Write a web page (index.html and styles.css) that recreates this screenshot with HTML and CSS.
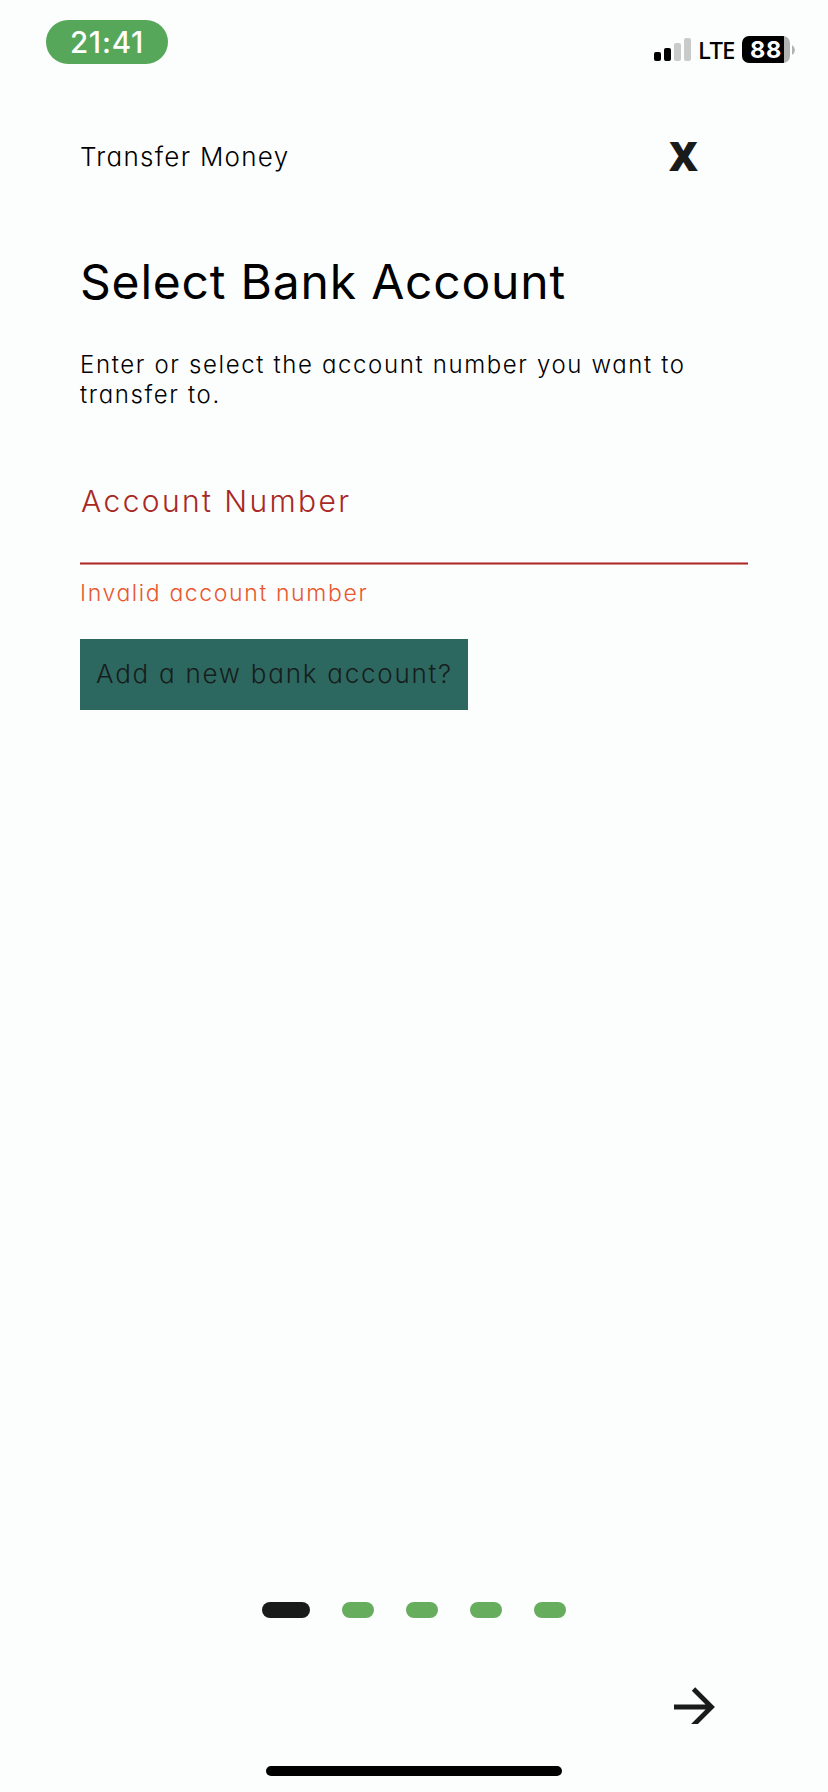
FILE: index.html
```html
<!DOCTYPE html>
<html lang="en">
<head>
<meta charset="utf-8">
<title>Transfer Money</title>
<link rel="stylesheet" href="styles.css">
</head>
<body>
<div class="screen">
  <div class="status">
    <div class="time">21:41</div>
    <div class="indicators">
      <svg class="signal" width="37" height="24" viewBox="0 0 37 24">
        <rect x="0" y="14" width="7" height="9" rx="2"/>
        <rect x="10" y="10" width="7" height="13" rx="2"/>
        <rect x="20" y="5" width="7" height="18" rx="2" fill="#c9cbca"/>
        <rect x="30" y="0" width="7" height="23" rx="2" fill="#c9cbca"/>
      </svg>
      <span class="network">LTE</span>
      <div class="battery"><span class="level">88</span></div>
      <svg class="nub" width="3" height="10" viewBox="0 0 3 10"><path d="M0 0Q3 2 3 5T0 10Z" fill="#b1b3b2"/></svg>
    </div>
  </div>
  <header class="header">
    <span class="flow-name">Transfer Money</span>
    <span class="close">X</span>
  </header>
  <main class="content">
    <h1 class="title">Select Bank Account</h1>
    <p class="description"><span class="line-one">Enter or select the account number you want to</span><br><span class="line-two">transfer to.</span></p>
    <div class="field"><span class="label">Account Number</span></div>
    <div class="error">Invalid account number</div>
    <div class="add"><span>Add a new bank account?</span></div>
  </main>
  <footer class="footer">
    <div class="steps"><i class="step current"></i><i class="step"></i><i class="step"></i><i class="step"></i><i class="step"></i></div>
    <svg class="next" width="41" height="37" viewBox="0 0 41 37"><path d="M0 20H37M19.5 2L37.5 20L18 39.5" fill="none" stroke="#191b1a" stroke-width="4.8"/></svg>
    <div class="home"></div>
  </footer>
</div>
</body>
</html>
```
FILE: styles.css
```css
* { box-sizing: border-box; }
body { margin: 0; background: #fcfefd; }
.screen {
  width: 828px; height: 1792px; display: flex; flex-direction: column;
  background: #fcfefd; color: #000; overflow: hidden;
  font-family: Inter, "Liberation Sans", sans-serif; font-weight: 300;
  font-feature-settings: "cv11" 1; white-space: nowrap;
}
.status { height: 112px; padding: 20px 33px 0 46px; display: flex; justify-content: space-between; align-items: flex-start; }
.time { width: 122px; height: 44px; border-radius: 22px; background: #57a75b; color: #fff; font-size: 29.5px; font-weight: 500; line-height: 45px; letter-spacing: 0.8px; text-align: center; }
.indicators { display: flex; align-items: flex-start; padding-top: 16px; }
.signal { margin: 2px 7px 0 0; }
.network { width: 44px; font: 500 24px/28px "Noto Sans", sans-serif; letter-spacing: -0.9px; }
.battery { width: 48px; height: 27px; border-radius: 7px; background: linear-gradient(to right, #000 42px, #b1b3b2 42px); color: #fff; }
.level { display: block; padding-left: 8px; font-size: 23.5px; line-height: 28px; font-weight: 700; letter-spacing: 0.8px; }
.nub { margin: 9px 0 0 2px; }
.header { height: 88px; padding: 0 130px 0 80px; display: flex; justify-content: space-between; align-items: center; }
.flow-name { font-size: 26px; letter-spacing: 1.28px; }
.close { font: 800 40px/54px "Open Sans", sans-serif; color: #191b1a; }
.content { padding: 0 80px; flex: 1; display: flex; flex-direction: column; align-items: flex-start; }
.title { margin: 52px 0 0; font-size: 48px; line-height: 60px; font-weight: 400; letter-spacing: 0.8px; font-feature-settings: normal; }
.description { margin: 38px 0 0; font-size: 24px; line-height: 30px; letter-spacing: 1.63px; }
.field { width: 668px; height: 86px; margin-top: 69px; padding-top: 1px; background: linear-gradient(#d48d8b 0 1px, #a92824 1px 2px, #d48d8b 2px 3px) bottom / 100% 3px no-repeat; color: #a92824; }
.label { display: block; padding-left: 1px; font-size: 30px; line-height: 42px; letter-spacing: 2.4px; }
.error { margin-top: 12px; font-size: 23px; line-height: 32px; letter-spacing: 1.62px; color: #e85830; }
.add { width: 388px; height: 71px; margin-top: 30px; padding-left: 16px; background: #2d6860; color: #171d1c; font-size: 26px; line-height: 70px; letter-spacing: 1.75px; }
.footer { height: 190px; display: flex; flex-direction: column; align-items: center; }
.steps { display: flex; gap: 32px; }
.step { width: 32px; height: 16px; border-radius: 8px; background: #67ad5e; }
.step.current { width: 48px; background: #191b1a; }
.next { align-self: flex-end; margin: 69px 113px 42px 0; flex: none; }
.home { width: 296px; height: 10px; border-radius: 5px; background: #000; }
```
